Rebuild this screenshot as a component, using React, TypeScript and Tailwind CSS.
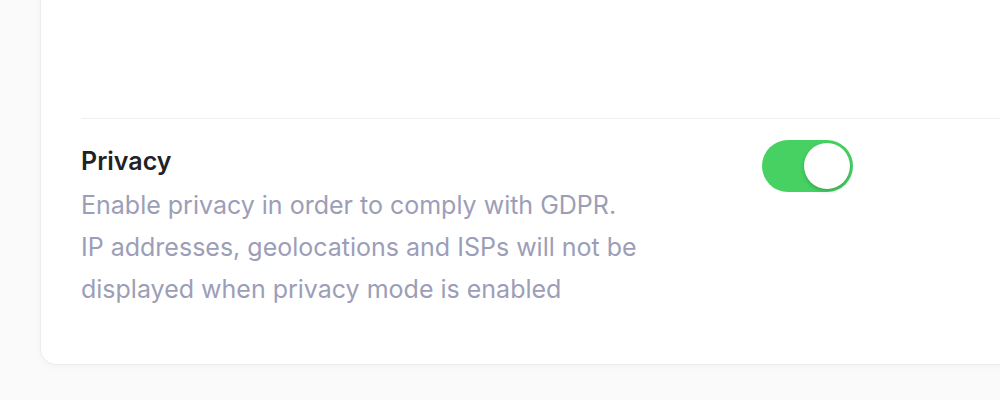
export default function App() {
  return (
    <div className="h-[400px] w-[1000px] overflow-hidden bg-[#fafafa] font-['Inter',sans-serif]">
      <div className="-mt-[40px] ml-[40px] w-[1000px] rounded-2xl border border-[#ececec] bg-white pl-[40px] shadow-[0_2px_6px_rgba(0,0,0,0.03)]">
        <div className="h-[158px] border-b border-[#efefef]" />
        <div className="flex items-start pt-[21px] pb-[54px]">
          <div className="mt-[6px] w-[681px]">
            <h3 className="text-[25px] font-semibold leading-[30px] text-[#1f2226]">Privacy</h3>
            <p className="mt-[8px] text-[25px] leading-[42px] text-[#9c9eb8]">
              Enable privacy in order to comply with GDPR.
              <br />
              IP addresses, geolocations and ISPs will not be
              <br />
              displayed when privacy mode is enabled
            </p>
          </div>
          <button className="relative h-[52px] w-[91px] rounded-full bg-[#47d163]">
            <span className="absolute right-[3px] top-[3px] h-[46px] w-[46px] rounded-full bg-white shadow-[0_2px_4px_rgba(0,0,0,0.2)]" />
          </button>
        </div>
      </div>
    </div>
  );
}
